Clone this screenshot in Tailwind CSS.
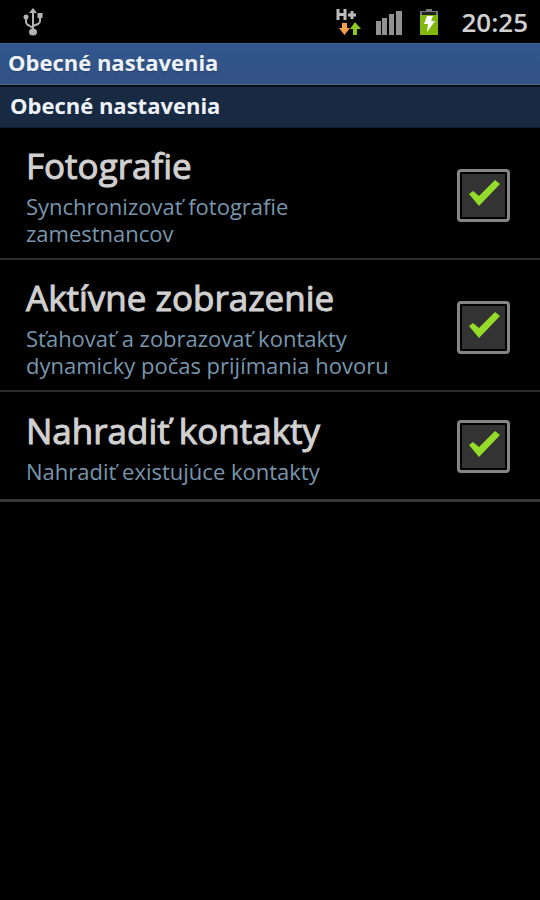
<!DOCTYPE html>
<html lang="sk">
<head>
<meta charset="utf-8">
<meta name="viewport" content="width=device-width, initial-scale=1">
<title>Obecné nastavenia</title>
<script src="https://cdn.jsdelivr.net/npm/@tailwindcss/browser@4"></script>
</head>
<body class="min-h-screen bg-black font-['Open_Sans','Noto_Sans',sans-serif] text-[#d0d0d0]">
<header>
  <div class="flex h-[43px] items-center pr-3 pl-[22px]">
    <svg class="h-8 w-6" viewBox="0 0 24 32" fill="none" stroke="#b4b4b4" stroke-width="2" role="img" aria-label="USB">
      <path d="M11 5v21M4 12v4q0 2 2 3l5 3M18 10v5q0 2-2 3l-5 2"/>
      <g fill="#b4b4b4" stroke="none"><path d="M11 2l4 5H7z"/><circle cx="4" cy="11" r="2.5"/><path d="M15.500 7h5v5h-5z"/><ellipse cx="11" cy="26" rx="4" ry="3.500"/></g>
    </svg>
    <div class="ml-auto flex items-center">
      <svg class="h-8 w-7" viewBox="0 0 28 32" fill="none" role="img" aria-label="H+">
        <path d="M3 3v11M10 3v11M3 8.500h7M13 9h8M17 5v8" stroke="#bdbdbd" stroke-width="3"/>
        <path d="M7 17h5v5h3l-5.500 7-5.500-7h3z" fill="#f5a04c"/>
        <path d="M18 29h4v-6h4l-6-7-5 7h3z" fill="#8ccb1d"/>
      </svg>
      <svg class="ml-3 h-8 w-7" viewBox="0 0 28 32" fill="#929292" role="img" aria-label="Signál">
        <path d="M1 15h5v14H1zM7 12h5v17H7zM14 8h5v21h-5zM21 5h6v24h-6z"/>
      </svg>
      <svg class="ml-4 h-8 w-5" viewBox="0 0 20 32" role="img" aria-label="Batéria sa nabíja">
        <path d="M7 3h6v2h6v24H1V5h6z" fill="#777"/><path d="M3 6h14v3H3z" fill="#222"/><path d="M1 9h18v20H1z" fill="#82b80d"/>
        <path d="M8 10h6l-2 5h4L8 26l1-8H5z" fill="#fff"/>
      </svg>
      <time class="ml-[22px] text-[26px] leading-8 font-semibold">20:25</time>
    </div>
  </div>
  <h1 class="h-[42px] border-t border-b border-t-[#41618f] border-b-[#4b6489] bg-linear-to-b from-[#31578f] to-[#325182] px-2 text-[22px] leading-9 font-bold text-[#edf2f8] text-shadow-sm">Obecné nastavenia</h1>
</header>
<main>
  <h2 class="h-[43px] border-t-2 border-b border-t-[#080d18] border-b-[#101c2c] bg-[#182942] px-[10px] text-[22px] leading-9 font-bold text-[#edf2f8]">Obecné nastavenia</h2>
  <label class="flex items-center justify-between border-b-2 border-[#2b2b2b] pt-[15px] pr-[30px] pb-[11px] pl-[26px]">
    <span class="block max-w-[390px]"><span class="block text-[35px] leading-[46px] [-webkit-text-stroke:1px_#d0d0d0]">Fotografie</span><span class="mt-1 block max-w-[320px] text-[22px] leading-[27px] text-[#7896ad]">Synchronizovať fotografie zamestnancov</span></span>
    <span class="relative size-[53px] shrink-0"><input type="checkbox" checked class="size-full appearance-none rounded-[4px] border-3 border-[#858585] bg-[#333] shadow-[inset_0_0_0_2px_#000]"><svg class="pointer-events-none absolute inset-0 size-full" viewBox="0 0 53 53" fill="#94dc29"><path d="M12 25l4-3 6 5 16-16 5 4-21 22z"/></svg></span>
  </label>
  <label class="flex items-center justify-between border-b-2 border-[#2b2b2b] pt-[15px] pr-[30px] pb-[11px] pl-[26px]">
    <span class="block max-w-[390px]"><span class="block text-[35px] leading-[46px] [-webkit-text-stroke:1px_#d0d0d0]">Aktívne zobrazenie</span><span class="mt-1 block text-[22px] leading-[27px] text-[#7896ad]">Sťahovať a zobrazovať kontakty<br>dynamicky počas prijímania hovoru</span></span>
    <span class="relative size-[53px] shrink-0"><input type="checkbox" checked class="size-full appearance-none rounded-[4px] border-3 border-[#858585] bg-[#333] shadow-[inset_0_0_0_2px_#000]"><svg class="pointer-events-none absolute inset-0 size-full" viewBox="0 0 53 53" fill="#94dc29"><path d="M12 25l4-3 6 5 16-16 5 4-21 22z"/></svg></span>
  </label>
  <label class="flex items-center justify-between border-b-3 border-[#383838] pt-4 pr-[30px] pb-[14px] pl-[26px]">
    <span class="block max-w-[390px]"><span class="block text-[35px] leading-[46px] [-webkit-text-stroke:1px_#d0d0d0]">Nahradiť kontakty</span><span class="mt-1 block text-[22px] leading-[27px] text-[#7896ad]">Nahradiť existujúce kontakty</span></span>
    <span class="relative size-[53px] shrink-0"><input type="checkbox" checked class="size-full appearance-none rounded-[4px] border-3 border-[#858585] bg-[#333] shadow-[inset_0_0_0_2px_#000]"><svg class="pointer-events-none absolute inset-0 size-full" viewBox="0 0 53 53" fill="#94dc29"><path d="M12 25l4-3 6 5 16-16 5 4-21 22z"/></svg></span>
  </label>
</main>
</body>
</html>
